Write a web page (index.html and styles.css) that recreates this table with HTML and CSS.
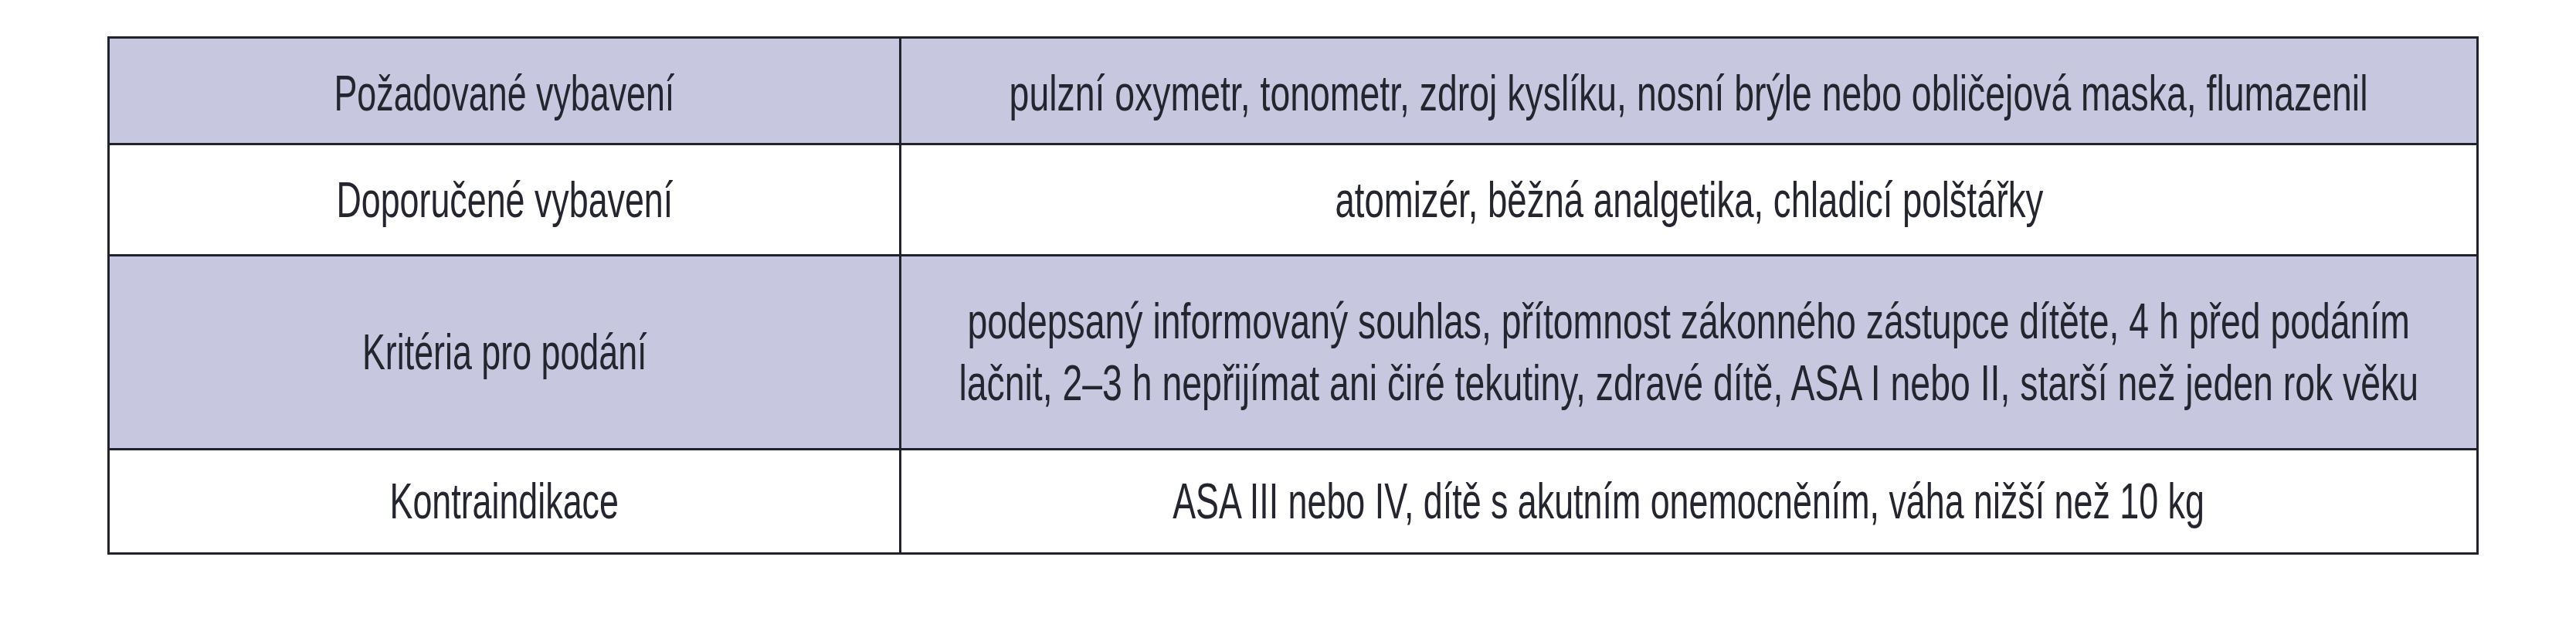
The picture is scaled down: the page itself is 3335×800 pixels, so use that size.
FILE: index.html
```html
<!DOCTYPE html>
<html lang="cs">
<head>
<meta charset="utf-8">
<title>Vybavení a kritéria</title>
<link rel="stylesheet" href="styles.css">
</head>
<body>
<div class="page">
  <table class="criteria">
    <colgroup>
      <col class="col-label">
      <col class="col-value">
    </colgroup>
    <tbody>
      <tr class="row row-shaded row-1">
        <td class="label"><div class="cell"><span class="txt">Požadované vybavení</span></div></td>
        <td class="value"><div class="cell"><span class="txt">pulzní oxymetr, tonometr, zdroj kyslíku, nosní brýle nebo obličejová maska, flumazenil</span></div></td>
      </tr>
      <tr class="row row-plain row-2">
        <td class="label"><div class="cell"><span class="txt">Doporučené vybavení</span></div></td>
        <td class="value"><div class="cell"><span class="txt">atomizér, běžná analgetika, chladicí polštářky</span></div></td>
      </tr>
      <tr class="row row-shaded row-3">
        <td class="label"><div class="cell"><span class="txt">Kritéria pro podání</span></div></td>
        <td class="value"><div class="cell"><span class="txt">podepsaný informovaný souhlas, přítomnost zákonného zástupce dítěte, 4 h před podáním<br>lačnit, 2–3 h nepřijímat ani čiré tekutiny, zdravé dítě, ASA I nebo II, starší než jeden rok věku</span></div></td>
      </tr>
      <tr class="row row-plain row-4">
        <td class="label"><div class="cell"><span class="txt">Kontraindikace</span></div></td>
        <td class="value"><div class="cell"><span class="txt">ASA III nebo IV, dítě s akutním onemocněním, váha nižší než 10 kg</span></div></td>
      </tr>
    </tbody>
  </table>
</div>
</body>
</html>
```
FILE: styles.css
```css
html, body {
  margin: 0;
  padding: 0;
  background: #ffffff;
}

.page {
  padding: 47px 0 0 139px;
}

.criteria {
  width: 3070px;
  border-collapse: collapse;
  table-layout: fixed;
  font-family: "Liberation Sans", Arial, sans-serif;
  font-size: 64px;
  line-height: 80px;
  color: #25252f;
}

.col-label {
  width: 1025px;
}

.criteria td {
  border: 3px solid #22222c;
  padding: 0;
  vertical-align: middle;
}

.cell {
  display: flex;
  justify-content: center;
  align-items: center;
}

.txt {
  display: inline-block;
  flex: none;
  text-align: center;
  white-space: nowrap;
  transform: scaleX(0.7);
  transform-origin: center;
}

.row-1 .value .txt,
.row-3 .value .txt {
  transform: scaleX(0.725);
}

.row-2 .value .txt {
  transform: scaleX(0.712);
}

.row-shaded {
  background: #c7c8df;
}

.row-plain {
  background: #ffffff;
}

.row-1 { height: 138px; }
.row-1 .cell { padding-top: 6px; }
.row-2 { height: 144px; }
.row-3 { height: 251px; }
.row-4 { height: 135px; }
```
